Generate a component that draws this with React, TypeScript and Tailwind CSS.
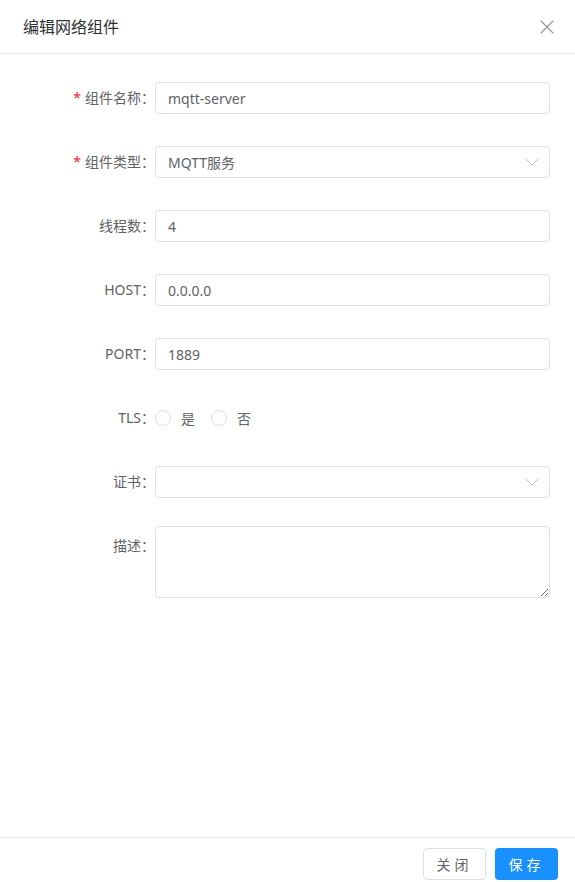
import { ChevronDown, X } from "lucide-react"

const font = { fontFamily: '"Noto Sans", "Noto Sans CJK SC", sans-serif' }

function Label({ text, required, top }: { text: string; required?: boolean; top?: boolean }) {
  return (
    <div className={`w-[155px] shrink-0 text-right text-[14px] text-[#606266] ${top ? "self-start leading-[40px]" : "leading-[40px]"}`}>
      {required && <span className="mr-[4px] text-[#f5222d]">*</span>}
      {text}：
    </div>
  )
}

function TextInput({ value }: { value: string }) {
  return (
    <div className="flex h-[32px] w-[395px] items-center rounded border border-[#dcdfe6] px-[12px] text-[14px] text-[#606266]">
      {value}
    </div>
  )
}

function Select({ value }: { value: string }) {
  return (
    <div className="flex h-[32px] w-[395px] items-center justify-between rounded border border-[#dcdfe6] pl-[12px] pr-[5px] text-[14px] text-[#606266]">
      <span>{value}</span>
      <ChevronDown size={24} strokeWidth={1} className="text-[#c0c4cc]" />
    </div>
  )
}

function Radio({ text }: { text: string }) {
  return (
    <div className="mr-[16px] flex items-center gap-[10px] text-[14px] text-[#606266]">
      <span className="h-[16px] w-[16px] rounded-full border border-[#dcdfe6]" />
      <span>{text}</span>
    </div>
  )
}

export default function App() {
  return (
    <div className="flex h-[882px] w-[575px] flex-col bg-white" style={font}>
      <div className="flex h-[54px] items-center justify-between border-b border-[#e8e8e8] pl-[23px] pr-[16px]">
        <span className="text-[16px] text-[#303133]">编辑网络组件</span>
        <X size={24} strokeWidth={1.1} className="text-[#909399]" />
      </div>

      <div className="flex flex-1 flex-col gap-[24px] pt-[24px]">
        <div className="flex h-[40px] items-center">
          <Label text="组件名称" required />
          <TextInput value="mqtt-server" />
        </div>
        <div className="flex h-[40px] items-center">
          <Label text="组件类型" required />
          <Select value="MQTT服务" />
        </div>
        <div className="flex h-[40px] items-center">
          <Label text="线程数" />
          <TextInput value="4" />
        </div>
        <div className="flex h-[40px] items-center">
          <Label text="HOST" />
          <TextInput value="0.0.0.0" />
        </div>
        <div className="flex h-[40px] items-center">
          <Label text="PORT" />
          <TextInput value="1889" />
        </div>
        <div className="flex h-[40px] items-center">
          <Label text="TLS" />
          <Radio text="是" />
          <Radio text="否" />
        </div>
        <div className="flex h-[40px] items-center">
          <Label text="证书" />
          <Select value="" />
        </div>
        <div className="flex">
          <Label text="描述" top />
          <textarea className="h-[72px] w-[395px] rounded border border-[#dcdfe6] px-[12px] py-[5px] text-[14px] text-[#606266] outline-none" />
        </div>
      </div>

      <div className="flex justify-end gap-[9px] border-t border-[#e8e8e8] pb-[2px] pr-[17px] pt-[10px]">
        <button className="h-[32px] w-[63px] rounded border border-[#dcdfe6] bg-white text-[14px] tracking-[4px] text-[#606266]">
          关闭
        </button>
        <button className="h-[32px] w-[63px] rounded bg-[#1890ff] text-[14px] tracking-[4px] text-white">
          保存
        </button>
      </div>
    </div>
  )
}
